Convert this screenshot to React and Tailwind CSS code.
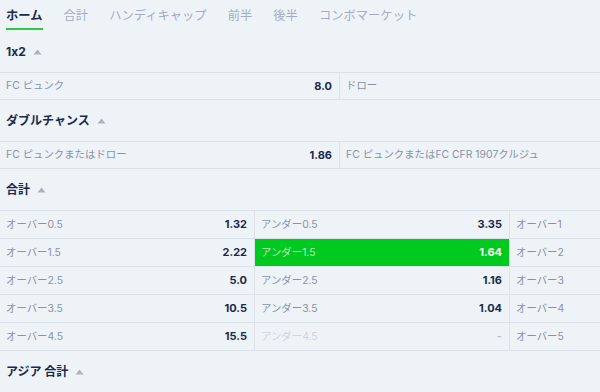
import React from "react";

const font = { fontFamily: '"Inter", "Noto Sans CJK JP", sans-serif', fontFeatureSettings: '"calt" 0' };

function Caret() {
  return (
    <svg width="9" height="6" viewBox="0 0 9 6" className="ml-[7px] mt-[1px]">
      <path d="M4.5 0.5 L8.5 5.5 L0.5 5.5 Z" fill="#a9b3c2" />
    </svg>
  );
}

function Header({ children }) {
  return (
    <div className="h-[41px] flex items-center pl-[6px] text-[12px] font-bold text-[#1b2a4a]">
      <span>{children}</span>
      <Caret />
    </div>
  );
}

function Cell({ label, odds, w, active, disabled, last }) {
  const bg = active ? "bg-[#00c920]" : "";
  const labelC = active ? "text-[#b8f0c0]" : disabled ? "text-[#cdd4de]" : "text-[#8992a4]";
  const oddsC = active ? "text-white" : disabled ? "text-[#b9c1cc]" : "text-[#1b2a4a]";
  return (
    <div
      className={`shrink-0 h-full flex items-center justify-between pl-[6px] pr-[7px] ${bg} ${last ? "" : "border-r border-[#dbe2ea]"}`}
      style={{ width: w }}
    >
      <span className={`text-[10.4px] ${labelC}`}>{label}</span>
      {odds !== undefined && (
        <span className={`text-[11px] font-bold ${oddsC}`}>{odds}</span>
      )}
    </div>
  );
}

function Row({ children, first }) {
  return (
    <div className={`h-[28px] flex border-b border-[#dbe2ea] ${first ? "border-t" : ""}`}>{children}</div>
  );
}

export default function App() {
  const tabs = ["合計", "ハンディキャップ", "前半", "後半", "コンボマーケット"];
  const totals = [
    ["オーバー0.5", "1.32", "アンダー0.5", "3.35", "オーバー1"],
    ["オーバー1.5", "2.22", "アンダー1.5", "1.64", "オーバー2"],
    ["オーバー2.5", "5.0", "アンダー2.5", "1.16", "オーバー3"],
    ["オーバー3.5", "10.5", "アンダー3.5", "1.04", "オーバー4"],
    ["オーバー4.5", "15.5", "アンダー4.5", "-", "オーバー5"],
  ];
  return (
    <div className="w-[600px] h-[392px] overflow-hidden bg-[#eef3f8]" style={font}>
      <div className="h-[31px] flex items-start pl-[6px] gap-[21px] text-[12.3px]">
        <div className="h-full flex flex-col justify-between">
          <span className="pt-[7px] font-bold text-[#1b2a4a]">ホーム</span>
          <div className="h-[2px] bg-[#2ec844] mb-[1px]" />
        </div>
        {tabs.map((t) => (
          <span key={t} className="pt-[7px] text-[#a4adbf]">{t}</span>
        ))}
      </div>
      <Header>1x2</Header>
      <Row first>
        <Cell label="FC ピュンク" odds="8.0" w={340} />
        <Cell label="ドロー" w={260} last />
      </Row>
      <Header>ダブルチャンス</Header>
      <Row first>
        <Cell label="FC ピュンクまたはドロー" odds="1.86" w={340} />
        <Cell label="FC ピュンクまたはFC CFR 1907クルジュ" w={260} last />
      </Row>
      <Header>合計</Header>
      <div className="border-t border-[#dbe2ea]">
        {totals.map((r, i) => (
          <div key={i} className="h-[28px] flex border-b border-[#dbe2ea]">
            <Cell label={r[0]} odds={r[1]} w={255} />
            <Cell label={r[2]} odds={r[3]} w={255} active={i === 1} disabled={i === 4} />
            <Cell label={r[4]} w={255} last />
          </div>
        ))}
      </div>
      <Header>アジア 合計</Header>
    </div>
  );
}
